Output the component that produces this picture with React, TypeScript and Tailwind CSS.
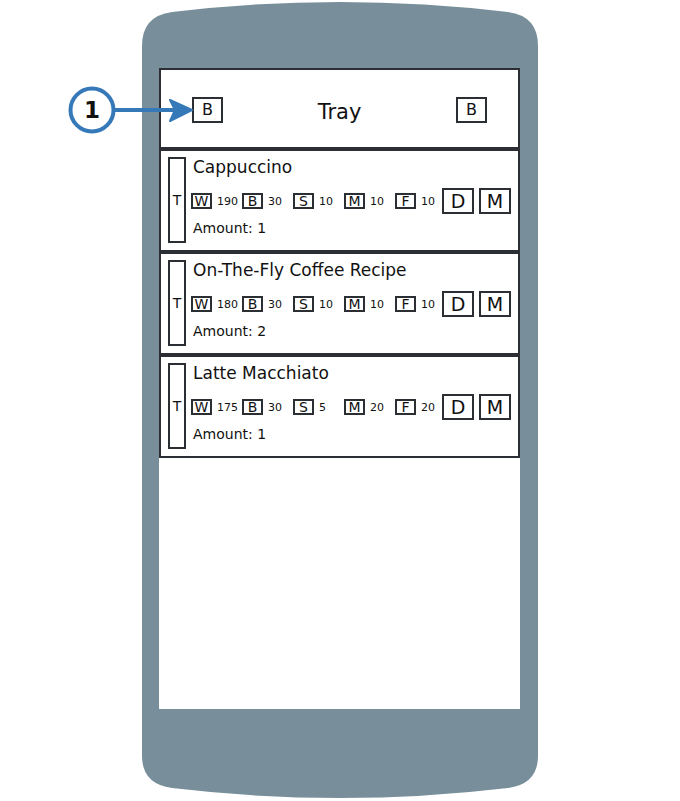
import React from 'react';

const ink = 'border-[#2b2f33]';

type Drink = {
  name: string;
  w: string;
  b: string;
  s: string;
  m: string;
  f: string;
  amount: number;
};

const drinks: Drink[] = [
  { name: 'Cappuccino', w: '190', b: '30', s: '10', m: '10', f: '10', amount: 1 },
  { name: 'On-The-Fly Coffee Recipe', w: '180', b: '30', s: '10', m: '10', f: '10', amount: 2 },
  { name: 'Latte Macchiato', w: '175', b: '30', s: '5', m: '20', f: '20', amount: 1 },
];

function Chip({ label, value, last }: { label: string; value: string; last?: boolean }) {
  return (
    <div className={`flex items-center gap-[5px] ${last ? 'w-[47px]' : 'w-[51px]'}`}>
      <div className={`w-[21px] h-[16px] border-2 ${ink} flex items-center justify-center text-[14px] leading-none`}>
        {label}
      </div>
      <span className="text-[11px] leading-none">{value}</span>
    </div>
  );
}

function DrinkRow({ d }: { d: Drink }) {
  return (
    <div className={`h-[103px] border-2 ${ink} flex items-start pl-[7px] pt-[6px] gap-[6px]`}>
      <div className={`w-[18px] h-[86px] border-2 ${ink} flex items-center justify-center text-[14px]`}>
        T
      </div>
      <div className="flex flex-col">
        <div className="text-[17px] leading-[20px] pl-[1px]">{d.name}</div>
        <div className="flex items-center h-[26px] mt-[11px] -ml-[1px]">
          <Chip label="W" value={d.w} />
          <Chip label="B" value={d.b} />
          <Chip label="S" value={d.s} />
          <Chip label="M" value={d.m} />
          <Chip label="F" value={d.f} last />
          <div className={`w-[32px] h-[26px] border-2 ${ink} flex items-center justify-center text-[19px]`}>D</div>
          <div className={`ml-[5px] w-[32px] h-[26px] border-2 ${ink} flex items-center justify-center text-[19px]`}>M</div>
        </div>
        <div className="text-[14px] leading-[18px] mt-[5px] pl-[1px]">Amount: {d.amount}</div>
      </div>
    </div>
  );
}

export default function App() {
  return (
    <div
      className="relative w-[680px] h-[801px] bg-white overflow-hidden text-[#111]"
      style={{ fontFamily: '"DejaVu Sans", "Liberation Sans", sans-serif' }}
    >
      {/* device body */}
      <svg className="absolute inset-0" width="680" height="801" viewBox="0 0 680 801">
        <path
          d="M142,46 Q142,16 172,12 Q340,-8 508,12 Q538,16 538,46 L538,756 Q538,784 508,788 Q340,808 172,788 Q142,784 142,756 Z"
          fill="#788f9b"
        />
      </svg>

      <div className="relative pt-[68px] pl-[159px]">
        <div className="w-[361px] h-[641px] bg-white flex flex-col">
          <div className={`h-[81px] border-2 ${ink} flex items-center justify-between px-[31px] pt-[2px]`}>
            <div className={`w-[31px] h-[26px] border-2 ${ink} flex items-center justify-center text-[16px]`}>B</div>
            <div className="text-[21px] pt-[6px]">Tray</div>
            <div className={`w-[31px] h-[26px] border-2 ${ink} flex items-center justify-center text-[16px]`}>B</div>
          </div>
          {drinks.map(d => (
            <DrinkRow key={d.name} d={d} />
          ))}
        </div>
      </div>

      {/* callout */}
      <svg className="absolute left-0 top-0" width="200" height="160" viewBox="0 0 200 160">
        <line x1="114" y1="110" x2="182" y2="110" stroke="#3679b9" strokeWidth="4" />
        <path d="M170,100 L192,110 L170,121 L175,110 Z" fill="#3679b9" stroke="#3679b9" strokeWidth="2" strokeLinejoin="round" />
        <circle cx="92" cy="110" r="21.5" fill="white" stroke="#3679b9" strokeWidth="4" />
      </svg>
      <div className="absolute left-[71px] top-[89px] w-[42px] h-[42px] flex items-center justify-center text-[23px] font-semibold">
        1
      </div>
    </div>
  );
}
